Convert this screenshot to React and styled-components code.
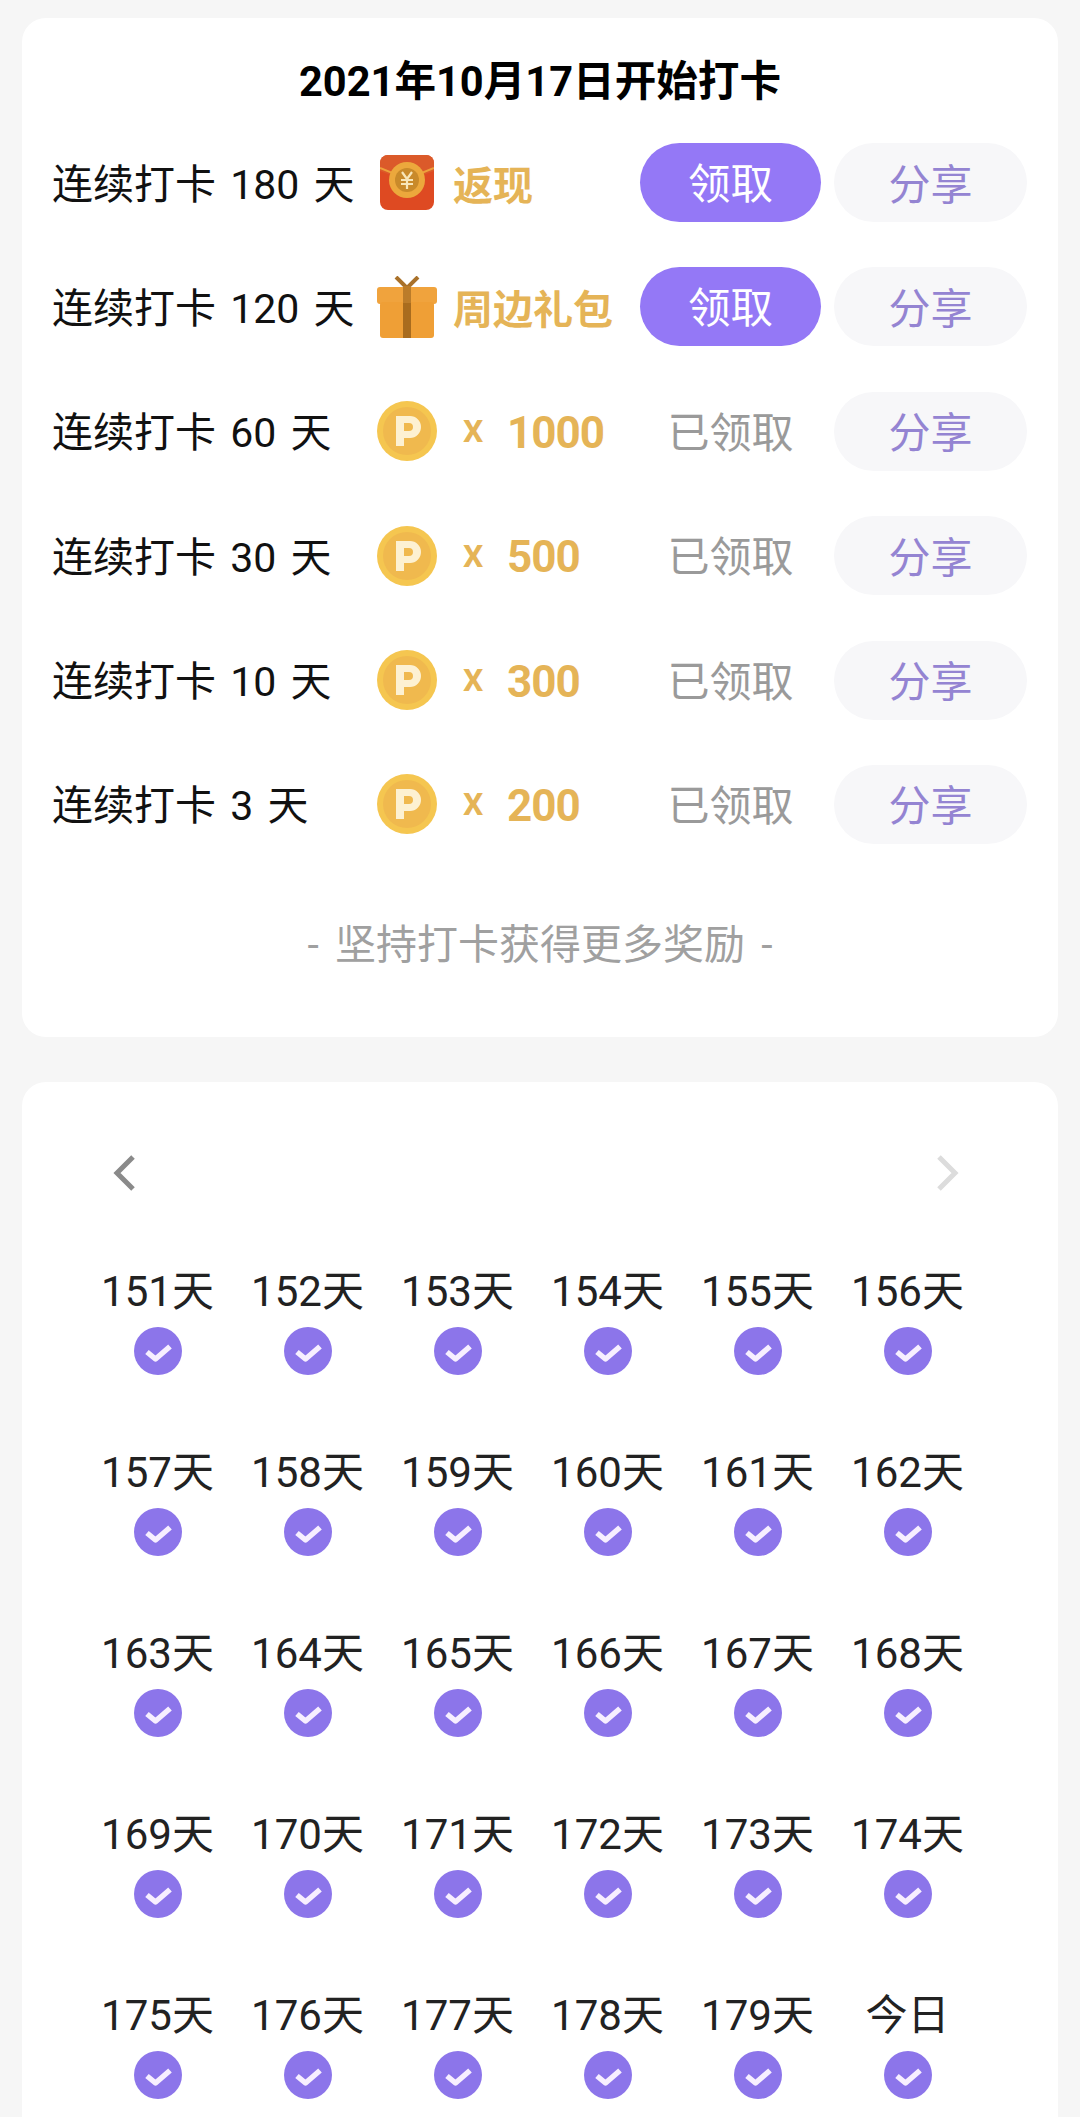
import React from "react";
import styled, { createGlobalStyle } from "styled-components";

const GlobalStyle = createGlobalStyle`
	html, body {
		margin: 0;
		padding: 0;
		background: #f6f6f6;
	}
	body {
		font-family: Roboto, "Noto Sans CJK SC", sans-serif;
		overflow: hidden;
	}
`;

const Page = styled.div`
	width: 1080px;
	height: 2117px;
	box-sizing: border-box;
	padding: 18px 22px 0;
	overflow: hidden;
	display: flex;
	flex-direction: column;
	gap: 45px;
`;

const Card = styled.section`
	background: #ffffff;
	border-radius: 24px;
	flex-shrink: 0;
`;

const RewardCard = styled(Card)`
	height: 1019px;
	padding: 0 31px 0 31px;
`;

const Title = styled.h1`
	margin: 0;
	padding-top: 39px;
	height: 125px;
	box-sizing: border-box;
	line-height: 50px;
	text-align: center;
	font-size: 41.6px;
	font-weight: 700;
	color: #000000;
`;

const RewardRow = styled.div`
	display: flex;
	align-items: center;
	height: 79px;
	margin-bottom: 45.4px;
`;

const RowLabel = styled.div`
	width: 324px;
	margin-left: -1px;
	margin-right: 1px;
	padding-bottom: 4px;
	font-size: 41px;
	word-spacing: 4px;
	color: #111111;
	white-space: nowrap;
`;

const Prize = styled.div`
	width: 263px;
	display: flex;
	align-items: center;
	color: #e5b457;
	font-weight: 700;
	white-space: nowrap;
`;

const IconSlot = styled.div`
	width: 60px;
	height: 62px;
	flex-shrink: 0;
	display: flex;
	align-items: center;
	justify-content: center;
`;

const PrizeName = styled.span`
	margin-left: 16px;
	font-size: 40px;
`;

const Times = styled.span`
	margin-left: 26px;
	width: 44px;
	font-size: 32px;
	font-weight: 700;
`;

const Amount = styled.span`
	padding-top: 3px;
	font-size: 44px;
	letter-spacing: -1px;
`;

const ClaimButton = styled.button`
	width: 181px;
	height: 79px;
	border: 0;
	padding: 0 0 4px;
	border-radius: 40px;
	background: #9478f6;
	color: #ffffff;
	font: inherit;
	font-size: 42.5px;
`;

const Claimed = styled.div`
	width: 181px;
	padding-bottom: 4px;
	text-align: center;
	font-size: 42px;
	color: #9a9a9a;
`;

const ShareButton = styled.button`
	width: 193px;
	height: 79px;
	margin-left: 13px;
	border: 0;
	padding: 0 0 3px;
	border-radius: 40px;
	background: #f7f7f9;
	color: #9484d2;
	font: inherit;
	font-size: 42px;
`;

const Hint = styled.div`
	margin-top: 76px;
	text-align: center;
	font-size: 41px;
	word-spacing: 6px;
	line-height: 50px;
	color: #a0a0a0;
`;

const CalendarCard = styled(Card)`
	padding: 73px 0 0 61px;
	height: 1100px;
`;

const Pager = styled.div`
	width: 877px;
	display: flex;
	justify-content: space-between;
	padding-left: 29px;
	box-sizing: border-box;
	height: 35px;
`;

const DayGrid = styled.div`
	margin-top: 75px;
	display: grid;
	grid-template-columns: repeat(6, 150px);
	grid-auto-rows: 181px;
`;

const Day = styled.div`
	display: flex;
	flex-direction: column;
	align-items: center;
	margin-left: -1px;
`;

const DayLabel = styled.div`
	height: 54px;
	line-height: 54px;
	font-size: 42px;
	color: #222222;
	white-space: nowrap;
`;

const Checked = styled.div`
	margin-top: 8px;
	width: 48px;
	height: 48px;
`;

const RedPacket = () => (
	<svg width="54" height="55" viewBox="0 0 54 55">
		<rect width="54" height="55" rx="8" fill="#de4a22" />
		<path d="M0 8a8 8 0 0 1 8-8h38a8 8 0 0 1 8 8v8l-27 10L0 16z" fill="#db5a2a" />
		<path d="M0 13l27 11 27-11" fill="none" stroke="#eda13c" strokeWidth="2" />
		<circle cx="27" cy="25" r="18" fill="#eca83c" />
		<circle cx="27" cy="25" r="12" fill="#c98a2a" />
		<path d="M22 17l5 7 5-7M21 25h12M21 29h12M27 24v10" fill="none" stroke="#f8e6b8" strokeWidth="2.2" />
	</svg>
);

const Gift = () => (
	<svg width="60" height="62" viewBox="0 0 60 62">
		<path d="M19 1l11 11 11-11" fill="none" stroke="#a9712a" strokeWidth="4" />
		<rect x="0" y="11" width="60" height="17" rx="3" fill="#f0a33d" />
		<rect x="3" y="26" width="54" height="36" rx="3" fill="#ef9f36" />
		<rect x="26" y="10" width="8" height="17" fill="#bb7c2a" />
		<rect x="26" y="27" width="8" height="35" fill="#a96c1e" />
	</svg>
);

const Coin = () => (
	<svg width="60" height="60" viewBox="0 0 60 60">
		<circle cx="30" cy="30" r="30" fill="#f5c650" />
		<circle cx="30" cy="30" r="24" fill="#f0b94e" />
		<path d="M19 15h14a11 11 0 0 1 0 22h-6v8h-8zM27 22v8h5a4 4 0 0 0 0-8z" fill="#fdf1d2" fillRule="evenodd" />
	</svg>
);

const Check = () => (
	<svg width="48" height="48" viewBox="0 0 48 48">
		<circle cx="24" cy="24" r="24" fill="#8c75ea" />
		<path d="M13 25l8.500 7 14.500-12.500" fill="none" stroke="#f7efff" strokeWidth="5.500" strokeLinejoin="round" />
	</svg>
);

const Chevron = ({ color, flip }) => (
	<svg width="24" height="36" viewBox="0 0 24 36">
		<path
			d={flip ? "M3 2l16 16-16 16" : "M21 2L5 18l16 16"}
			fill="none"
			stroke={color}
			strokeWidth="5"
		/>
	</svg>
);

const rewards = [
	{ days: 180, icon: <RedPacket />, name: "返现", open: true },
	{ days: 120, icon: <Gift />, name: "周边礼包", open: true },
	{ days: 60, amount: 1000 },
	{ days: 30, amount: 500 },
	{ days: 10, amount: 300 },
	{ days: 3, amount: 200 },
];

const days = [];
for (let i = 151; i < 180; i++) days.push(i + "天");
days.push("今日");

const App = () => {
	return (
		<Page>
			<GlobalStyle />
			<RewardCard>
				<Title>2021年10月17日开始打卡</Title>
				{rewards.map((r) => (
					<RewardRow key={r.days}>
						<RowLabel>连续打卡 {r.days} 天</RowLabel>
						<Prize>
							<IconSlot>{r.icon || <Coin />}</IconSlot>
							{r.name ? (
								<PrizeName>{r.name}</PrizeName>
							) : (
								<>
									<Times>X</Times>
									<Amount>{r.amount}</Amount>
								</>
							)}
						</Prize>
						{r.open ? <ClaimButton>领取</ClaimButton> : <Claimed>已领取</Claimed>}
						<ShareButton>分享</ShareButton>
					</RewardRow>
				))}
				<Hint>- 坚持打卡获得更多奖励 -</Hint>
			</RewardCard>
			<CalendarCard>
				<Pager>
					<Chevron color="#8a8a8a" />
					<Chevron color="#dcdcdc" flip />
				</Pager>
				<DayGrid>
					{days.map((d) => (
						<Day key={d}>
							<DayLabel>{d}</DayLabel>
							<Checked>
								<Check />
							</Checked>
						</Day>
					))}
				</DayGrid>
			</CalendarCard>
		</Page>
	);
};

export default App;
